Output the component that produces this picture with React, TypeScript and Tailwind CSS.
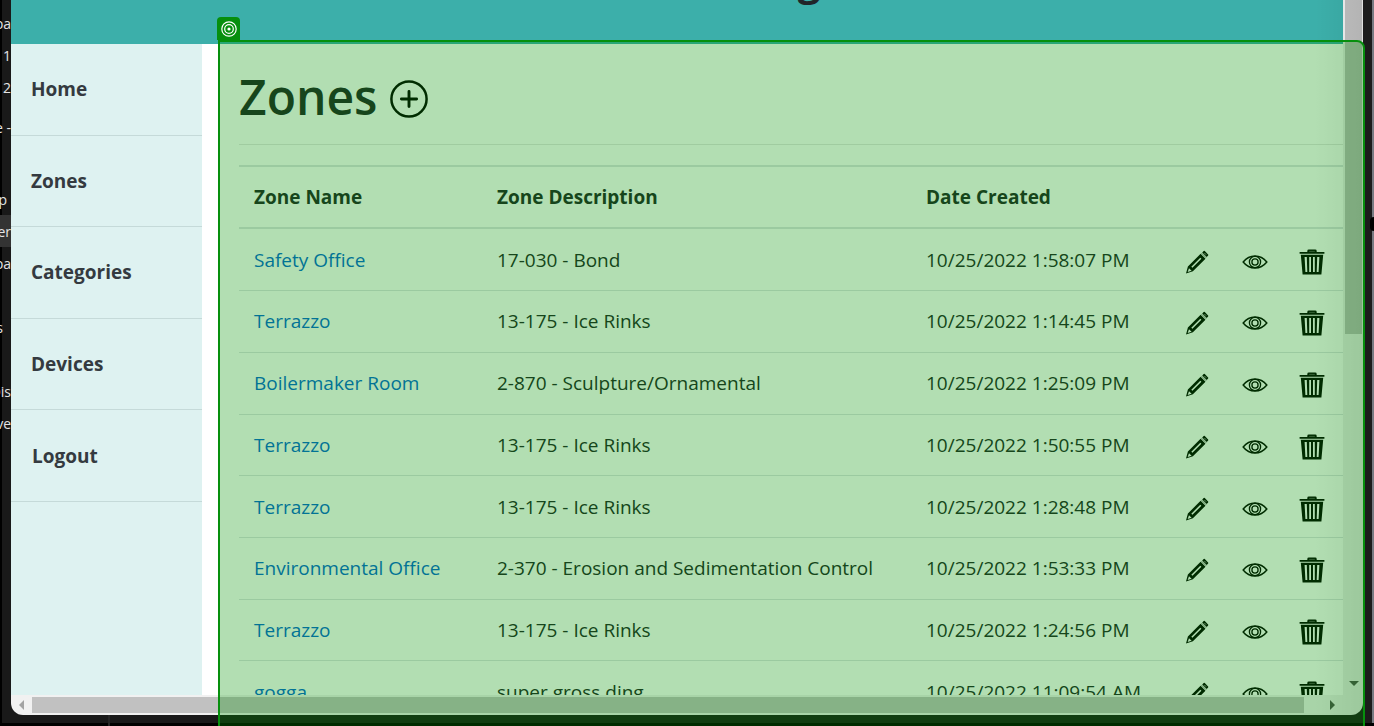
import React from "react";

type Zone = { name: string; description: string; created: string };

const zones: Zone[] = [
  { name: "Safety Office", description: "17-030 - Bond", created: "10/25/2022 1:58:07 PM" },
  { name: "Terrazzo", description: "13-175 - Ice Rinks", created: "10/25/2022 1:14:45 PM" },
  { name: "Boilermaker Room", description: "2-870 - Sculpture/Ornamental", created: "10/25/2022 1:25:09 PM" },
  { name: "Terrazzo", description: "13-175 - Ice Rinks", created: "10/25/2022 1:50:55 PM" },
  { name: "Terrazzo", description: "13-175 - Ice Rinks", created: "10/25/2022 1:28:48 PM" },
  { name: "Environmental Office", description: "2-370 - Erosion and Sedimentation Control", created: "10/25/2022 1:53:33 PM" },
  { name: "Terrazzo", description: "13-175 - Ice Rinks", created: "10/25/2022 1:24:56 PM" },
  { name: "gogga", description: "super gross ding", created: "10/25/2022 11:09:54 AM" },
];

const navItems = ["Home", "Zones", "Categories", "Devices", "Logout"];

const edgeRows = [
  { text: "pa", style: "h-8" },
  { text: "1", style: "h-8" },
  { text: "2", style: "h-8" },
  { text: "e -", style: "h-12" },
  { text: "", style: "h-8" },
  { text: "p", style: "h-8 pr-1" },
  { text: "er", style: "h-8 bg-[#333333]" },
  { text: "pa", style: "h-8" },
  { text: "", style: "h-8" },
  { text: "s", style: "h-8 pr-2" },
  { text: "", style: "h-8" },
  { text: "Dis", style: "h-8" },
  { text: "ve", style: "h-8" },
];

function PencilIcon() {
  return (
    <svg viewBox="0 0 24 24" className="size-6" fill="currentColor" aria-hidden="true">
      <path d="M17.2 2.6 18.7 1.1Q19.2.6 19.8 1.1L23.1 4.4Q23.6 5 23.1 5.6L21.7 7Z" />
      <path d="M16.5 3.1 21.2 7.8" stroke="currentColor" strokeOpacity=".5" strokeWidth="1" />
      <path fillRule="evenodd" d="M15.6 3.8 20.5 8.7 7.9 21.3 1 23.6 2.9 16.5ZM4 18.2 2.7 22.1 6.6 20.8ZM15.3 7.7 6.3 16.7 7.4 17.8 16.4 8.8Z" />
      <path d="m19.6 3.2 1.4 1.4" stroke="#ffffff" strokeOpacity=".7" strokeWidth="1" />
    </svg>
  );
}

function EyeIcon() {
  return (
    <svg viewBox="0 0 26 16" className="h-4 w-[26px]" fill="none" stroke="currentColor" aria-hidden="true">
      <path d="M1.2 8Q6 1.9 13 1.9T24.8 8Q20 14.1 13 14.1T1.2 8Z" strokeWidth="1.5" />
      <circle cx="13" cy="8" r="5.6" strokeWidth="1.3" />
      <circle cx="13" cy="8" r="3.1" strokeWidth="1.3" />
    </svg>
  );
}

function TrashIcon() {
  return (
    <svg viewBox="0 0 26 26" className="size-[26px]" fill="currentColor" aria-hidden="true">
      <path d="M8.3 3V2Q8.3.6 9.8.6H16.2Q17.7.6 17.7 2V3H25.4V4.8H.6V3Z" />
      <path d="M10.2 2.4H15.8" stroke="#ffffff" strokeOpacity=".3" strokeWidth="1" />
      <path fillRule="evenodd" d="M1.8 5.8H24.2L22.4 25.4H3.6ZM5.6 8 6.4 23H8.3L7.8 8ZM10.2 8V23H12V8ZM14 8V23H15.8V8ZM18.2 8 17.7 23H19.6L20.4 8Z" />
    </svg>
  );
}

function IconButton({ label, children }: { label: string; children: React.ReactNode }) {
  return (
    <button type="button" aria-label={label} className="mt-1 flex h-7 items-center text-black">
      {children}
    </button>
  );
}

function Sidebar() {
  return (
    <nav className="w-[191px] shrink-0 bg-[#def2f1]">
      <ul className="grid h-[458px]">
        {navItems.map((item) => (
          <li key={item} className="border-b border-[#c5dad9] last:pl-px">
            <a href="#" className="flex h-full items-center px-5 text-[19px] leading-7 font-bold text-[#343a40]">
              {item}
            </a>
          </li>
        ))}
      </ul>
    </nav>
  );
}

function ZoneTable() {
  return (
    <table className="h-[558px] w-full table-fixed border-collapse text-left text-[19px] leading-7 text-[#212529]">
      <colgroup>
        <col className="w-[243px]" />
        <col className="w-[429px]" />
        <col />
        <col className="w-[57px]" />
        <col className="w-[57px]" />
        <col className="w-[58px]" />
      </colgroup>
      <thead>
        <tr className="border-y-2 border-[#dee2e6]">
          <th className="px-[15px] py-4 font-bold">Zone Name</th>
          <th className="px-[15px] py-4 font-bold">Zone Description</th>
          <th className="px-[15px] py-4 font-bold">Date Created</th>
          <td colSpan={3} />
        </tr>
      </thead>
      <tbody>
        {zones.map((zone, i) => (
          <tr key={i} className="border-b border-[#dee2e6]">
            <td className="px-[15px] whitespace-nowrap">
              <a href="#" className="text-[#0366d6]">{zone.name}</a>
            </td>
            <td className="px-[15px] whitespace-nowrap">{zone.description}</td>
            <td className="px-[15px] whitespace-nowrap">{zone.created}</td>
            <td className="pl-[14px]"><IconButton label="Edit zone"><PencilIcon /></IconButton></td>
            <td className="pl-[14px]"><IconButton label="View zone"><EyeIcon /></IconButton></td>
            <td className="pl-[14px]"><IconButton label="Delete zone"><TrashIcon /></IconButton></td>
          </tr>
        ))}
      </tbody>
    </table>
  );
}

function Page() {
  return (
    <div className="flex min-w-0 flex-1 flex-col overflow-hidden bg-white">
      <header className="flex h-11 shrink-0 items-start justify-center overflow-hidden bg-[#3cafaa] pl-[264px]">
        <span className="-mt-[45px] text-[40px] leading-[52px] font-bold text-[#212529]">g</span>
      </header>
      <div className="flex min-h-0 flex-1">
        <Sidebar />
        <main className="min-w-0 flex-1 overflow-hidden pl-[37px]">
          <div className="flex h-[101px] items-center gap-3 border-b border-[#e5e5e5] pt-2.5">
            <h1 className="-mt-1 text-[48px] leading-[64px] font-semibold text-[#212529]">Zones</h1>
            <button type="button" aria-label="Add zone" className="text-black">
              <svg viewBox="0 0 40 40" className="size-10" fill="none" stroke="currentColor" aria-hidden="true">
                <circle cx="20" cy="20" r="17.6" strokeWidth="2.5" />
                <path d="M20 12.4V27.6M12.4 20H27.6" strokeWidth="2.9" strokeLinecap="round" />
              </svg>
            </button>
          </div>
          <div className="pt-5">
            <ZoneTable />
          </div>
        </main>
      </div>
    </div>
  );
}

export default function App() {
  return (
    <div className="relative flex h-screen overflow-hidden bg-[#191919] font-['Open_Sans','Noto_Sans',sans-serif]">
      <div className="w-[11px] shrink-0 overflow-hidden pt-[7px] text-[14px] text-[#e4e4e4] shadow-[inset_2px_0_0_#000000]">
        {edgeRows.map((row, i) => (
          <div key={i} className={`flex items-center justify-end whitespace-nowrap ${row.style}`}>
            {row.text}
          </div>
        ))}
      </div>

      <div className="flex min-w-0 flex-1 flex-col pb-[11px]">
        <div className="flex min-h-0 flex-1 flex-col overflow-hidden rounded-b-xl bg-[#f1f1f1]">
          <div className="flex min-h-0 flex-1">
            <Page />
            <div className="flex w-5 shrink-0 flex-col items-center justify-between pr-px pb-[9px] pl-0.5">
              <div className="h-[334px] w-full bg-[#c1c1c1]" />
              <svg viewBox="0 0 10 5" className="h-[5px] w-[10px]" aria-hidden="true">
                <path d="M0 0H10L5 5Z" fill="#505050" />
              </svg>
            </div>
          </div>
          <div className="flex h-5 shrink-0 items-center">
            <div className="flex w-[21px] items-center justify-center">
              <svg viewBox="0 0 5 10" className="h-[10px] w-[5px]" aria-hidden="true">
                <path d="M5 0V10L0 5Z" fill="#a3a3a3" />
              </svg>
            </div>
            <div className="h-4 flex-1 bg-[#c1c1c1]" />
            <div className="flex w-[59px] items-center pl-[26px]">
              <svg viewBox="0 0 5 10" className="h-[10px] w-[5px]" aria-hidden="true">
                <path d="M0 0V10L5 5Z" fill="#505050" />
              </svg>
            </div>
          </div>
        </div>
      </div>

      <div className="w-[11px] shrink-0 border-r-2 border-[#777b82] bg-[#1c1c1c]" />

      <div className="absolute inset-x-0 bottom-0 h-[3px] bg-black" />
      <div className="absolute bottom-0 left-[108px] h-[11px] w-0.5 bg-[#252525]" />
      <div className="absolute top-[217px] right-0 h-[14px] w-1 rounded-l-full bg-black" />
      <div className="pointer-events-none absolute top-0 right-[11px] bottom-[11px] w-12 rounded-br-xl bg-linear-to-r from-transparent to-black/7" />

      <div className="pointer-events-none absolute top-10 right-[9px] -bottom-2 left-[218px] rounded-tr-lg border-2 border-[#068f0d] bg-[#009100]/30" />
      <div className="absolute top-[17px] left-[217px] flex h-[23px] w-[23px] items-center justify-center rounded-t bg-[#068f0d]">
        <svg viewBox="0 0 16 16" className="size-4" fill="none" stroke="#ffffff" aria-hidden="true">
          <circle cx="8" cy="8" r="7.2" strokeWidth="1.2" />
          <circle cx="8" cy="8" r="4.3" strokeWidth="1.2" />
          <circle cx="8" cy="8" r="1.6" fill="#ffffff" stroke="none" />
        </svg>
      </div>
    </div>
  );
}
